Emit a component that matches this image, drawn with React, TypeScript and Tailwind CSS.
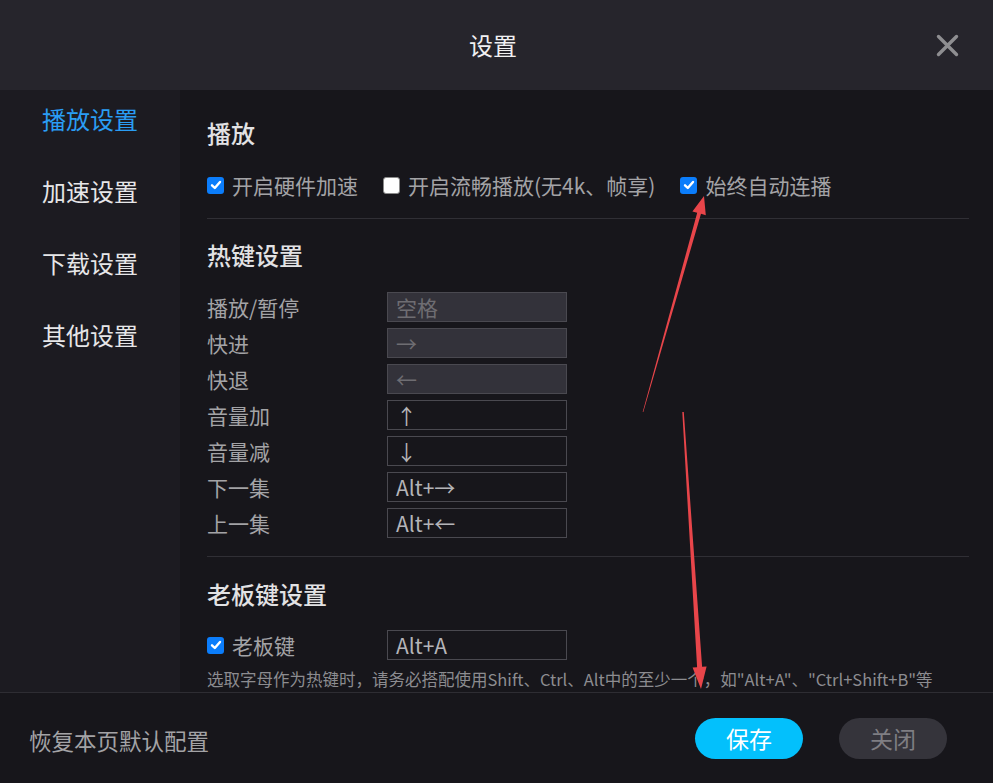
import React from "react";

const FONT = '"Noto Sans CJK SC", "Noto Sans", sans-serif';

function Check({ checked }: { checked: boolean }) {
  if (checked) {
    return (
      <span className="flex h-[17px] w-[17px] shrink-0 items-center justify-center rounded-[3px] bg-[#0b7dfb]">
        <svg width="12" height="12" viewBox="0 0 12 12">
          <path d="M2 6.3 L4.8 9 L10 3" fill="none" stroke="#ffffff" strokeWidth="2.4" strokeLinecap="round" strokeLinejoin="round" />
        </svg>
      </span>
    );
  }
  return <span className="h-[17px] w-[17px] shrink-0 rounded-[3px] border border-[#8a8a8a] bg-white" />;
}

function CheckItem({ checked, label }: { checked: boolean; label: string }) {
  return (
    <div className="flex items-center gap-[8px]">
      <Check checked={checked} />
      <span className="text-[21px] leading-[30px] text-[#a3a3a6]">{label}</span>
    </div>
  );
}

const hotkeys: { label: string; value: string; filled: boolean }[] = [
  { label: "播放/暂停", value: "空格", filled: true },
  { label: "快进", value: "→", filled: true },
  { label: "快退", value: "←", filled: true },
  { label: "音量加", value: "↑", filled: false },
  { label: "音量减", value: "↓", filled: false },
  { label: "下一集", value: "Alt+→", filled: false },
  { label: "上一集", value: "Alt+←", filled: false },
];

function KeyBox({ value, filled }: { value: string; filled: boolean }) {
  return (
    <div
      className={
        filled
          ? "flex h-[30px] w-[180px] items-center border border-[#4a4950] bg-[#33323a] pl-[8px] text-[21px] text-[#6e6d72]"
          : "flex h-[30px] w-[180px] items-center border border-[#4a4950] pl-[8px] text-[21px] text-[#b4b4b8]"
      }
    >
      <span className="leading-[30px]">{value}</span>
    </div>
  );
}

export default function App() {
  return (
    <div className="relative flex h-[783px] w-[993px] flex-col overflow-hidden bg-[#17161b]" style={{ fontFamily: FONT }}>
      {/* Header */}
      <div className="relative flex h-[90px] shrink-0 items-center justify-center bg-[#26252c] pr-[7px]">
        <span className="text-[24px] leading-[32px] text-[#f0f0f2]">设置</span>
        <div className="absolute right-[34px] top-[34px]">
          <svg width="23" height="23" viewBox="0 0 23 23">
            <path d="M2.5 2.5 L20.5 20.5 M20.5 2.5 L2.5 20.5" stroke="#8e8e91" strokeWidth="3.4" strokeLinecap="round" />
          </svg>
        </div>
      </div>

      {/* Body */}
      <div className="flex h-[602px] shrink-0">
        {/* Sidebar */}
        <div className="flex w-[180px] shrink-0 flex-col gap-[40px] bg-[#1c1b21] pl-[42px] pt-[13px]">
          <span className="text-[24px] leading-[32px] text-[#2a9df4]">播放设置</span>
          <span className="text-[24px] leading-[32px] text-[#e6e6e8]">加速设置</span>
          <span className="text-[24px] leading-[32px] text-[#e6e6e8]">下载设置</span>
          <span className="text-[24px] leading-[32px] text-[#e6e6e8]">其他设置</span>
        </div>

        {/* Content */}
        <div className="flex flex-1 flex-col overflow-hidden pl-[27px] pr-[24px] pt-[27px]">
          <div className="text-[24px] font-medium leading-[32px] text-[#e2e2e4]">播放</div>
          <div className="mt-[21px] flex h-[30px] items-center gap-[25px]">
            <CheckItem checked label="开启硬件加速" />
            <CheckItem checked={false} label="开启流畅播放(无4k、帧享)" />
            <CheckItem checked label="始终自动连播" />
          </div>
          <div className="mt-[18px] h-px bg-[#302f35]" />

          <div className="mt-[20px] text-[24px] font-medium leading-[32px] text-[#e2e2e4]">热键设置</div>
          <div className="mt-[21px] flex flex-col gap-[6px]">
            {hotkeys.map((h) => (
              <div key={h.label} className="flex h-[30px] items-center">
                <span className="w-[180px] text-[21px] leading-[30px] text-[#a3a3a6]">{h.label}</span>
                <KeyBox value={h.value} filled={h.filled} />
              </div>
            ))}
          </div>
          <div className="mt-[18px] h-px bg-[#302f35]" />

          <div className="mt-[21px] text-[24px] font-medium leading-[32px] text-[#e2e2e4]">老板键设置</div>
          <div className="mt-[20px] flex h-[30px] items-center">
            <div className="w-[180px]">
              <CheckItem checked label="老板键" />
            </div>
            <KeyBox value="Alt+A" filled={false} />
          </div>
          <div className="mt-[9px] whitespace-nowrap text-[16.5px] leading-[20px] text-[#8c8c90]">
            选取字母作为热键时，请务必搭配使用Shift、Ctrl、Alt中的至少一个，如"Alt+A"、"Ctrl+Shift+B"等
          </div>
        </div>
      </div>

      {/* Footer */}
      <div className="flex flex-1 items-center border-t border-[#2e2d33] bg-[#17161b] pl-[29px] pr-[46px]">
        <span className="mt-[4px] text-[22.5px] leading-[30px] text-[#a3a3a6]">恢复本页默认配置</span>
        <div className="ml-auto flex items-center gap-[36px]">
          <button className="flex h-[41px] w-[108px] items-center justify-center rounded-full bg-[#03c0fc] text-[23px] text-white">
            保存
          </button>
          <button className="flex h-[41px] w-[108px] items-center justify-center rounded-full bg-[#35343b] text-[23px] text-[#7f7e83]">
            关闭
          </button>
        </div>
      </div>

      {/* Annotation arrows */}
      <svg className="pointer-events-none absolute left-0 top-0" width="993" height="783" viewBox="0 0 993 783">
        <polygon
          points="643.3,412 701,213.8 705.8,215.2 704,196 692.4,211.4 697.2,212.8 642.7,412"
          fill="#e8454a"
        />
        <polygon
          points="682.3,412 697.1,667.2 692.6,667.5 701,689 706.6,666.5 702.1,666.8 683.8,412"
          fill="#e8454a"
        />
      </svg>
    </div>
  );
}
